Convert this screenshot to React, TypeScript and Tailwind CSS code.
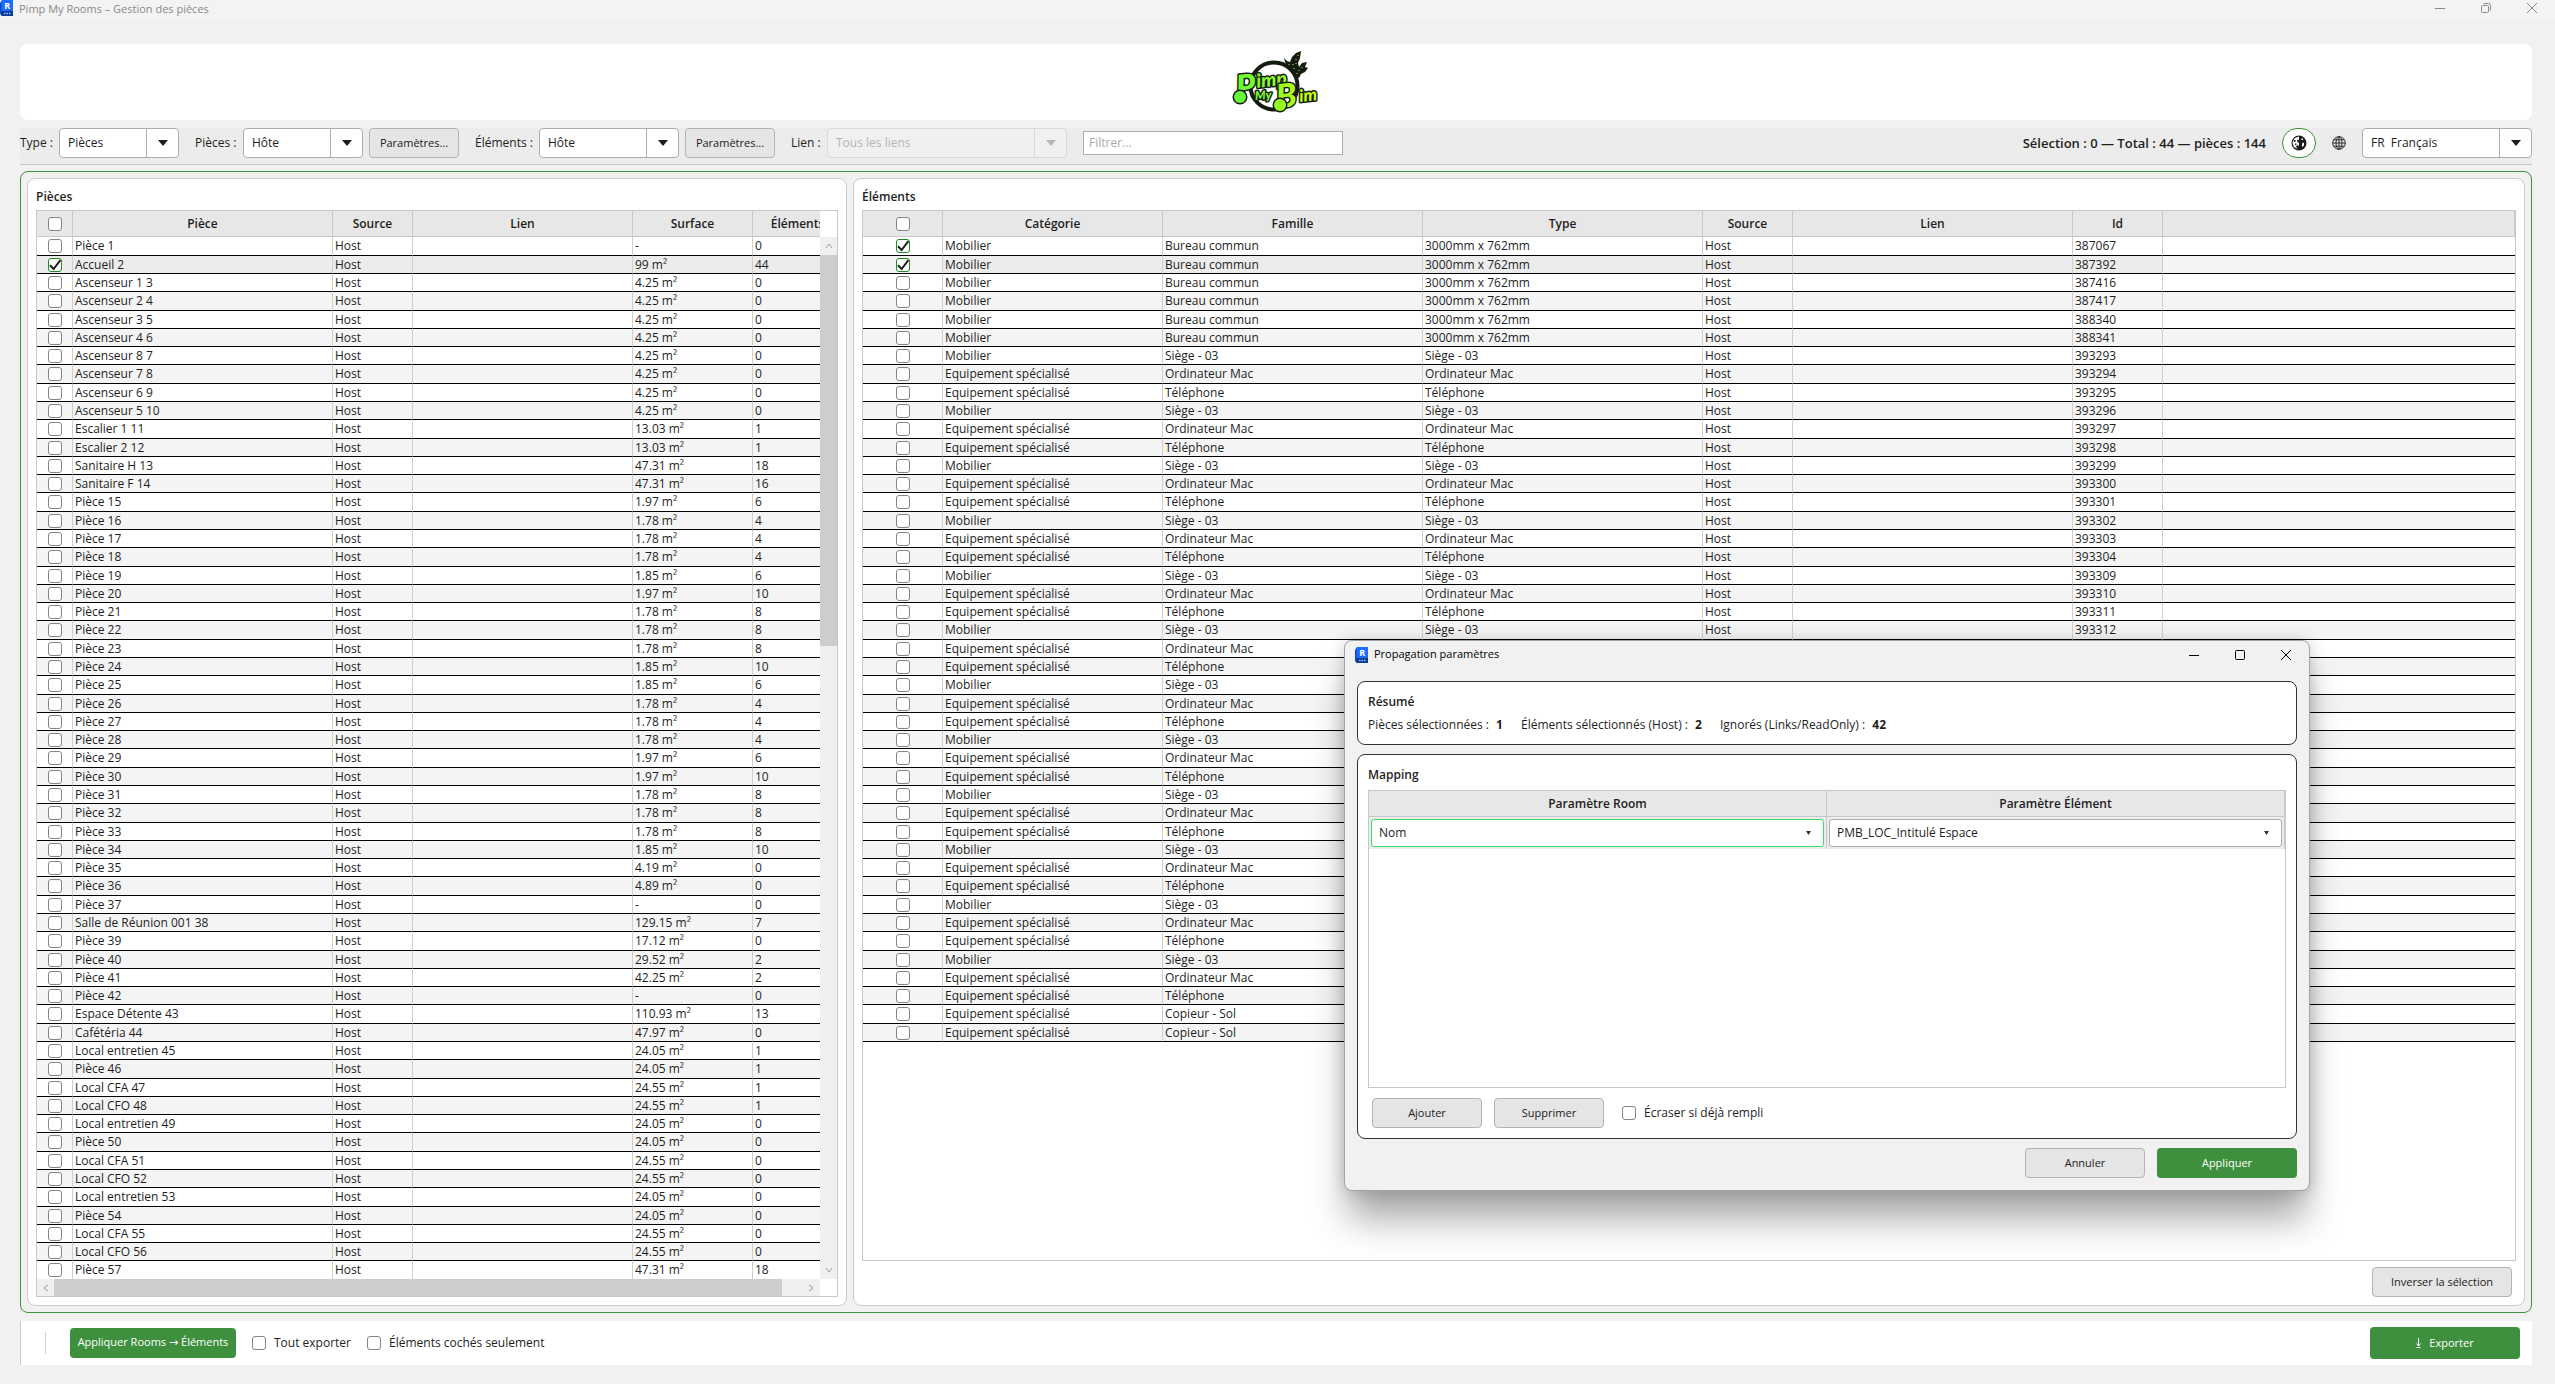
import type { ReactNode } from 'react'
import clsx from 'clsx'

type Room = [name: string, surface: string, elements: number]
type Item = [category: string, family: string, type: string, id: number]

const ROOMS: Room[] = [
  ['Pièce 1', '-', 0],
  ['Accueil 2', '99 m²', 44],
  ['Ascenseur 1 3', '4.25 m²', 0],
  ['Ascenseur 2 4', '4.25 m²', 0],
  ['Ascenseur 3 5', '4.25 m²', 0],
  ['Ascenseur 4 6', '4.25 m²', 0],
  ['Ascenseur 8 7', '4.25 m²', 0],
  ['Ascenseur 7 8', '4.25 m²', 0],
  ['Ascenseur 6 9', '4.25 m²', 0],
  ['Ascenseur 5 10', '4.25 m²', 0],
  ['Escalier 1 11', '13.03 m²', 1],
  ['Escalier 2 12', '13.03 m²', 1],
  ['Sanitaire H 13', '47.31 m²', 18],
  ['Sanitaire F 14', '47.31 m²', 16],
  ['Pièce 15', '1.97 m²', 6],
  ['Pièce 16', '1.78 m²', 4],
  ['Pièce 17', '1.78 m²', 4],
  ['Pièce 18', '1.78 m²', 4],
  ['Pièce 19', '1.85 m²', 6],
  ['Pièce 20', '1.97 m²', 10],
  ['Pièce 21', '1.78 m²', 8],
  ['Pièce 22', '1.78 m²', 8],
  ['Pièce 23', '1.78 m²', 8],
  ['Pièce 24', '1.85 m²', 10],
  ['Pièce 25', '1.85 m²', 6],
  ['Pièce 26', '1.78 m²', 4],
  ['Pièce 27', '1.78 m²', 4],
  ['Pièce 28', '1.78 m²', 4],
  ['Pièce 29', '1.97 m²', 6],
  ['Pièce 30', '1.97 m²', 10],
  ['Pièce 31', '1.78 m²', 8],
  ['Pièce 32', '1.78 m²', 8],
  ['Pièce 33', '1.78 m²', 8],
  ['Pièce 34', '1.85 m²', 10],
  ['Pièce 35', '4.19 m²', 0],
  ['Pièce 36', '4.89 m²', 0],
  ['Pièce 37', '-', 0],
  ['Salle de Réunion 001 38', '129.15 m²', 7],
  ['Pièce 39', '17.12 m²', 0],
  ['Pièce 40', '29.52 m²', 2],
  ['Pièce 41', '42.25 m²', 2],
  ['Pièce 42', '-', 0],
  ['Espace Détente 43', '110.93 m²', 13],
  ['Cafétéria 44', '47.97 m²', 0],
  ['Local entretien 45', '24.05 m²', 1],
  ['Pièce 46', '24.05 m²', 1],
  ['Local CFA 47', '24.55 m²', 1],
  ['Local CFO 48', '24.55 m²', 1],
  ['Local entretien 49', '24.05 m²', 0],
  ['Pièce 50', '24.05 m²', 0],
  ['Local CFA 51', '24.55 m²', 0],
  ['Local CFO 52', '24.55 m²', 0],
  ['Local entretien 53', '24.05 m²', 0],
  ['Pièce 54', '24.05 m²', 0],
  ['Local CFA 55', '24.55 m²', 0],
  ['Local CFO 56', '24.55 m²', 0],
  ['Pièce 57', '47.31 m²', 18],
]

const DESKS = [387067, 387392, 387416, 387417, 388340, 388341]
const WORKSTATIONS = [
  393293, 393294, 393295, 393296, 393297, 393298, 393299, 393300, 393301, 393302, 393303, 393304,
  393309, 393310, 393311, 393312, 393313, 393314, 393315, 393316, 393317, 393318, 393319, 393320,
  393321, 393322, 393323, 393324, 393325, 393326, 393327, 393328, 393329, 393330, 393331, 393332,
]

const KINDS: [string, string][] = [
  ['Mobilier', 'Siège - 03'],
  ['Equipement spécialisé', 'Ordinateur Mac'],
  ['Equipement spécialisé', 'Téléphone'],
]

const ITEMS: Item[] = [
  ...DESKS.map((id): Item => ['Mobilier', 'Bureau commun', '3000mm x 762mm', id]),
  ...WORKSTATIONS.map((id, i): Item => {
    const [category, family] = KINDS[i % 3]
    return [category, family, family, id]
  }),
  ['Equipement spécialisé', 'Copieur - Sol', 'Copieur - Sol', 393401],
  ['Equipement spécialisé', 'Copieur - Sol', 'Copieur - Sol', 393402],
]

const TH = 'h-[26px] border-r border-b border-[#c8c8c8] bg-[#e7e7e7] p-0 font-semibold'
const TD = 'h-[18px] border-r border-b border-r-[#cfcfcf] border-b-black p-0 pl-[2px] leading-4 group-nth-[7n+1]:h-[19px] group-nth-[7n+4]:h-[19px]'
const ROW = 'group even:bg-[#f4f4f4]'

function Checkbox({ checked = false, label, id }: { checked?: boolean; label?: string; id?: string }) {
  return (
    <span className="mx-auto grid size-[14px] shrink-0">
      <input
        id={id}
        type="checkbox"
        defaultChecked={checked}
        aria-label={label}
        className="peer size-[14px] appearance-none rounded-[3px] border border-[#858585] bg-white [grid-area:1/1] checked:border-[#1f8a24]"
      />
      <svg
        viewBox="0 0 14 14"
        className="pointer-events-none hidden size-[14px] fill-none stroke-[#1c1c1c] stroke-2 [grid-area:1/1] peer-checked:block"
      >
        <path d="M2 7.2 5.6 11 12.4 2.2" />
      </svg>
    </span>
  )
}

function Button({ className, children }: { className?: string; children: ReactNode }) {
  return (
    <button
      type="button"
      className={clsx(
        'h-[30px] shrink-0 rounded-[4px] border border-[#b4b4b4] bg-[#e5e5e5] text-[11px] whitespace-nowrap text-[#222]',
        className,
      )}
    >
      {children}
    </button>
  )
}

function GreenButton({ className, children }: { className?: string; children: ReactNode }) {
  return (
    <button
      type="button"
      className={clsx('shrink-0 rounded-[4px] bg-[#3e8f3e] text-[11px] whitespace-nowrap text-white', className)}
    >
      {children}
    </button>
  )
}

interface ComboProps {
  id: string
  value: string
  className: string
  disabled?: boolean
  label?: string
}

function Combo({ id, value, className, disabled, label }: ComboProps) {
  return (
    <div
      className={clsx(
        'flex h-[30px] shrink-0 overflow-hidden rounded-[4px] border',
        disabled ? 'border-[#d9d9d9] bg-[#f0f0f0] text-[#b5b5b5]' : 'border-[#adadad] bg-white text-[#1e1e1e]',
        className,
      )}
    >
      <select
        id={id}
        disabled={disabled}
        aria-label={label}
        className="min-w-0 flex-1 appearance-none bg-transparent pl-2 opacity-100 outline-none"
      >
        <option>{value}</option>
      </select>
      <span className={clsx('grid w-8 place-items-center border-l', disabled ? 'border-[#d9d9d9]' : 'border-[#adadad]')}>
        <svg viewBox="0 0 10 6" className="h-[6px] w-[10px] fill-current">
          <path d="M0 0h10L5 6z" />
        </svg>
      </span>
    </div>
  )
}

function MappingCombo({ value, label, focused }: { value: string; label: string; focused?: boolean }) {
  return (
    <div
      className={clsx(
        'flex h-7 items-center rounded-[3px] border bg-white pr-3',
        focused ? 'border-[#3ddc68]' : 'border-[#adadad]',
      )}
    >
      <select aria-label={label} className="h-full min-w-0 flex-1 appearance-none bg-transparent pl-[7px] outline-none">
        <option>{value}</option>
      </select>
      <svg viewBox="0 0 5 4" className="h-1 w-[5px] fill-[#333]">
        <path d="M0 0h5L2.5 4z" />
      </svg>
    </div>
  )
}

function RevitIcon() {
  return (
    <svg viewBox="0 0 13 16" className="h-4 w-[13px] shrink-0">
      <path d="M1 1.5 2.5 0H12a1 1 0 0 1 1 1v14a1 1 0 0 1-1 1H2L0 14V3z" fill="#0a4fc4" />
      <rect x="1.5" width="11.5" height="11" rx="1" fill="#1c6dff" />
      <rect x="1.5" y="11" width="11.5" height="5" fill="#0b3a94" />
      <text x="7.2" y="9" textAnchor="middle" className="fill-white font-['Open_Sans'] text-[9px] font-bold">R</text>
      <path d="M4 13.5h1.5M6.5 13.5H8M9 13.5h1.5" stroke="#9fc0ff" strokeWidth="1.5" />
    </svg>
  )
}

function Logo() {
  return (
    <svg viewBox="0 0 88 62" className="h-[62px] w-[88px]" role="img" aria-label="Pimp My Bim">
      <defs>
        <linearGradient id="lime" gradientUnits="userSpaceOnUse" x1="0" y1="0" x2="88" y2="0">
          <stop offset="0" stopColor="#5dfb3c" />
          <stop offset="0.5" stopColor="#8dfc22" />
          <stop offset="1" stopColor="#dcff08" />
        </linearGradient>
      </defs>
      <circle cx="42" cy="35" r="23.5" fill="#fff" stroke="#141b12" strokeWidth="4" />
      <path
        d="M53 11 52 7 55 10 58 11 60 6 64 2 69 0 68 7 66 12 67 16 70 12 75 11 73 16 76 17 73 21 69 23 67 27 62 25 60 20 56 16z"
        fill="#141b12"
      />
      <path
        d="M66 4v1M64 8v1M61 13v1M64 12v1M62 17v1M67 19v1M65 22v1M70 16v1M57 13v1"
        stroke="#b7ff1c"
        strokeWidth="1"
      />
      <g
        fill="url(#lime)"
        stroke="#141b12"
        strokeWidth="3"
        strokeLinejoin="round"
        paintOrder="stroke"
        className="font-['Lato'] font-black italic"
      >
        <text x="23" y="49" fontSize="12" transform="rotate(-4 24 46)">My</text>
        <g transform="rotate(-6 14 46)">
          <text x="26" y="38" fontSize="19">imp</text>
          <text x="5" y="47" fontSize="33">P</text>
        </g>
        <g transform="rotate(-6 48 55)">
          <text x="68" y="53" fontSize="17">im</text>
          <text x="45" y="57" fontSize="33">B</text>
        </g>
        <circle cx="8" cy="46" r="6" />
        <circle cx="48" cy="54" r="6" />
      </g>
    </svg>
  )
}

// Windows caption glyphs: minimise, maximise / restore, close
function CaptionButtons({ restored, className }: { restored?: boolean; className: string }) {
  return (
    <div className={clsx('flex items-center fill-none', className)}>
      <button type="button" aria-label="Réduire">
        <svg viewBox="0 0 10 10" className="size-[10px]"><path d="M0 5.5h10" /></svg>
      </button>
      <button type="button" aria-label="Agrandir">
        {restored ? (
          <svg viewBox="0 0 10 10" className="size-[10px]">
            <rect x="0.5" y="2.5" width="7" height="7" rx="1" />
            <path d="M2.5 .5h5a2 2 0 0 1 2 2v5" />
          </svg>
        ) : (
          <svg viewBox="0 0 10 10" className="size-[10px]"><rect x="0.5" y="0.5" width="9" height="9" rx="1" /></svg>
        )}
      </button>
      <button type="button" aria-label="Fermer">
        <svg viewBox="0 0 10 10" className="size-[10px]"><path d="M0 0l10 10M10 0 0 10" /></svg>
      </button>
    </div>
  )
}

function Toolbar() {
  return (
    <div className="mt-2 flex h-[37px] shrink-0 items-start border-b border-[#c8c8c8] bg-[#ececec] whitespace-nowrap">
      <label htmlFor="kind" className="w-[39px] leading-[30px]">Type :</label>
      <Combo id="kind" value="Pièces" className="w-[120px]" />
      <label htmlFor="rooms" className="ml-4 w-12 leading-[30px]">Pièces :</label>
      <Combo id="rooms" value="Hôte" className="w-[120px]" />
      <Button className="ml-[6px] w-[90px]">Paramètres...</Button>
      <label htmlFor="elements" className="ml-4 w-16 leading-[30px]">Éléments :</label>
      <Combo id="elements" value="Hôte" className="w-[140px]" />
      <Button className="ml-[6px] w-[90px]">Paramètres...</Button>
      <label htmlFor="link" className="ml-4 w-9 leading-[30px]">Lien :</label>
      <Combo id="link" value="Tous les liens" className="w-[240px]" disabled />
      <input
        type="text"
        aria-label="Filtrer"
        placeholder="Filtrer..."
        className="mt-[3px] ml-4 h-6 w-[260px] border border-[#adadad] bg-white pb-[2px] pl-[5px] outline-none placeholder:text-[#a8a8a8]"
      />
      <p className="mr-4 ml-auto text-[13px] leading-[30px] font-semibold text-[#1e1e1e]">
        Sélection : 0 — Total : 44 — pièces : 144
      </p>
      <button
        type="button"
        aria-label="Thème"
        className="grid h-[30px] w-[34px] place-items-center rounded-full border border-[#3e8f3e] bg-white"
      >
        <svg viewBox="0 0 16 16" className="size-4">
          <circle cx="8" cy="8" r="7.5" fill="#1c1c1c" />
          <path d="M3 4 5 2.5 8 1.5V5L6.5 4.5 6 6.5 8 8V11L6.5 10 5 11.5 6.5 14 3 12 1.5 8z" fill="#fff" />
          <path d="M10.5 3.5h1.5v1.5h-1.5zM11 8.500l2-1v3l-2 1.5z" fill="#fff" />
          <path d="M3 5h1.5v2H3zM4 8.5h1.5v1.5H4z" fill="#1c1c1c" />
        </svg>
      </button>
      <button type="button" aria-label="Langue" className="mx-4 grid h-[30px] w-[14px] place-items-center">
        <svg viewBox="0 0 14 14" className="size-[14px] fill-none stroke-[#2b2b2b]">
          <circle cx="7" cy="7" r="6.3" />
          <ellipse cx="7" cy="7" rx="3" ry="6.3" />
          <path d="M7 .7v12.6M.7 7h12.6M1.6 3.8h10.8M1.6 10.2h10.8" />
        </svg>
      </button>
      <Combo id="lang" label="Langue de l’interface" value={'FR\u00a0 Français'} className="w-[170px]" />
    </div>
  )
}

function RoomsPanel() {
  return (
    <section className="flex w-[820px] shrink-0 flex-col rounded-lg border border-[#cacaca] bg-white p-2">
      <h2 className="mb-[3px] leading-5 font-semibold">Pièces</h2>
      <div className="flex min-h-0 flex-1 flex-col border border-[#c8c8c8]">
        <div className="flex min-h-0 flex-1">
          <div className="min-w-0 flex-1 overflow-hidden">
            <table className="w-[806px] table-fixed border-separate border-spacing-0">
              <thead>
                <tr>
                  <th className={clsx(TH, 'w-9')}><Checkbox label="Toutes les pièces" /></th>
                  <th className={clsx(TH, 'w-[260px]')}>Pièce</th>
                  <th className={clsx(TH, 'w-20')}>Source</th>
                  <th className={clsx(TH, 'w-[220px]')}>Lien</th>
                  <th className={clsx(TH, 'w-[120px]')}>Surface</th>
                  <th className={clsx(TH, 'w-[90px]')}>Éléments</th>
                </tr>
              </thead>
              <tbody>
                {ROOMS.map(([name, surface, elements], i) => (
                  <tr key={name} className={clsx(ROW, i === 1 && 'bg-[#ececec]!')}>
                    <td className={clsx(TD, 'pl-0!')}><Checkbox checked={i === 1} label={name} /></td>
                    <td className={TD}>{name}</td>
                    <td className={TD}>Host</td>
                    <td className={TD} />
                    <td className={TD}>{surface}</td>
                    <td className={TD}>{elements}</td>
                  </tr>
                ))}
              </tbody>
            </table>
          </div>
          <div className="mt-[26px] flex w-[17px] flex-col items-center bg-[#f0f0f0]">
            <svg viewBox="0 0 8 8" className="my-[5px] h-2 w-2 shrink-0 fill-none stroke-[#9a9a9a]"><path d="M1 6 4 2l3 4" /></svg>
            <div className="h-[391px] w-full bg-[#cdcdcd]" />
            <svg viewBox="0 0 8 8" className="mt-auto mb-[5px] h-2 w-2 shrink-0 fill-none stroke-[#9a9a9a]"><path d="M1 2l3 4 3-4" /></svg>
          </div>
        </div>
        <div className="mr-[17px] flex h-[17px] shrink-0 items-center bg-[#f0f0f0]">
          <svg viewBox="0 0 8 8" className="mr-1 ml-[5px] h-2 w-2 shrink-0 fill-none stroke-[#9a9a9a]"><path d="M6 1 2 4l4 3" /></svg>
          <div className="h-full w-[728px] bg-[#cdcdcd]" />
          <svg viewBox="0 0 8 8" className="mr-[5px] ml-auto h-2 w-2 shrink-0 fill-none stroke-[#9a9a9a]"><path d="M2 1l4 3-4 3" /></svg>
        </div>
      </div>
    </section>
  )
}

function ElementsPanel() {
  return (
    <section className="flex min-w-0 flex-1 flex-col rounded-lg border border-[#cacaca] bg-white p-2">
      <h2 className="mb-[3px] leading-5 font-semibold">Éléments</h2>
      <div className="min-h-0 flex-1 overflow-hidden border border-[#c8c8c8]">
        <table className="w-full table-fixed border-separate border-spacing-0">
          <thead>
            <tr>
              <th className={clsx(TH, 'w-20')}><Checkbox label="Tous les éléments" /></th>
              <th className={clsx(TH, 'w-[220px]')}>Catégorie</th>
              <th className={clsx(TH, 'w-[260px]')}>Famille</th>
              <th className={clsx(TH, 'w-[280px]')}>Type</th>
              <th className={clsx(TH, 'w-[90px]')}>Source</th>
              <th className={clsx(TH, 'w-[280px]')}>Lien</th>
              <th className={clsx(TH, 'w-[90px]')}>Id</th>
              <th className={TH} />
            </tr>
          </thead>
          <tbody>
            {ITEMS.map(([category, family, type, id], i) => {
              const td = clsx(TD, i === 1 && 'bg-[#ececec]')
              return (
                <tr key={id} className={ROW}>
                  <td className={clsx(TD, 'pl-0!')}><Checkbox checked={i < 2} label={`Élément ${id}`} /></td>
                  <td className={td}>{category}</td>
                  <td className={td}>{family}</td>
                  <td className={td}>{type}</td>
                  <td className={td}>Host</td>
                  <td className={td} />
                  <td className={td}>{id}</td>
                  <td className={clsx(TD, 'border-r-0')} />
                </tr>
              )
            })}
          </tbody>
        </table>
      </div>
      <Button className="mt-[6px] mr-1 w-[140px] self-end">Inverser la sélection</Button>
    </section>
  )
}

function PropagationDialog() {
  return (
    <div
      role="dialog"
      aria-labelledby="dialog-title"
      className="absolute top-[640px] left-[1344px] flex h-[551px] w-[966px] flex-col rounded-lg border border-[#a3a3a3] bg-[#f1f1f1] px-3 shadow-[0_32px_36px_-4px_rgba(0,0,0,0.34),0_0_16px_rgba(0,0,0,0.18)]"
    >
      <div className="-ml-[2px] flex h-[27px] shrink-0 items-center gap-1 text-[11px] text-black">
        <RevitIcon />
        <h2 id="dialog-title" className="ml-[2px]">Propagation paramètres</h2>
        <CaptionButtons className="mr-[6px] ml-auto gap-9 stroke-black" />
      </div>

      <section className="mt-[13px] h-16 shrink-0 rounded-lg border border-[#333] bg-white px-[10px] pt-[10px]">
        <h3 className="leading-5 font-semibold">Résumé</h3>
        <p className="mt-[3px] flex gap-[18px] leading-5">
          <span>Pièces sélectionnées : <b className="ml-1">1</b></span>
          <span>Éléments sélectionnés (Host) : <b className="ml-1">2</b></span>
          <span>Ignorés (Links/ReadOnly) : <b className="ml-1">42</b></span>
        </p>
      </section>

      <section className="mt-[9px] flex min-h-0 flex-1 flex-col rounded-lg border border-[#333] bg-white px-[10px] pt-[10px] pb-[10px]">
        <h3 className="leading-5 font-semibold">Mapping</h3>
        <div className="mt-[5px] min-h-0 flex-1 border border-[#c8c8c8]">
          <table className="w-full table-fixed border-separate border-spacing-0">
            <thead>
              <tr>
                <th className={TH}>Paramètre Room</th>
                <th className={TH}>Paramètre Élément</th>
              </tr>
            </thead>
            <tbody>
              <tr className="bg-[#ececec]">
                <td className="h-8 border-r border-[#c8c8c8] px-[2px] py-0">
                  <MappingCombo value="Nom" label="Paramètre Room" focused />
                </td>
                <td className="h-8 border-r border-[#c8c8c8] px-[2px] py-0">
                  <MappingCombo value="PMB_LOC_Intitulé Espace" label="Paramètre Élément" />
                </td>
              </tr>
            </tbody>
          </table>
        </div>
        <div className="mt-[10px] ml-1 flex items-center">
          <Button className="w-[110px]">Ajouter</Button>
          <Button className="mr-[18px] ml-3 w-[110px]">Supprimer</Button>
          <div className="flex items-center gap-2">
            <Checkbox id="overwrite" />
            <label htmlFor="overwrite">Écraser si déjà rempli</label>
          </div>
        </div>
      </section>

      <div className="flex shrink-0 justify-end gap-3 pt-[9px] pb-3">
        <Button className="w-[120px]">Annuler</Button>
        <GreenButton className="h-[30px] w-[140px]">Appliquer</GreenButton>
      </div>
    </div>
  )
}

export default function App() {
  return (
    <div className="relative flex h-screen flex-col overflow-hidden bg-[#f1f1f1] font-['Open_Sans','Noto_Sans',sans-serif] text-[12px] text-[#1e1e1e]">
      <header className="flex h-5 shrink-0 items-start bg-[#f3f3f3] pr-[18px] text-[11px] text-[#8a8a8a]">
        <RevitIcon />
        <h1 className="ml-[6px] leading-[18px]">Pimp My Rooms – Gestion des pièces</h1>
        <CaptionButtons restored className="ml-auto h-[15px] gap-9 stroke-[#8a8a8a]" />
      </header>

      <main className="mr-[23px] ml-5 flex min-h-0 flex-1 flex-col">
        <div className="mt-6 flex h-[76px] shrink-0 justify-center rounded-lg bg-white pt-[7px]">
          <Logo />
        </div>
        <Toolbar />
        <div className="mt-[6px] flex min-h-0 flex-1 gap-[6px] rounded-lg border border-[#3e8f3e] p-[6px]">
          <RoomsPanel />
          <ElementsPanel />
        </div>
      </main>

      <footer className="mt-2 mr-[23px] mb-[19px] ml-5 flex h-11 shrink-0 items-center border-l border-[#c8c8c8] bg-white pr-3 pl-6">
        <div className="mr-6 h-[22px] w-px bg-[#d0d0d0]" />
        <GreenButton className="mr-4 h-[30px] w-[166px]">
          Appliquer Rooms <span className="font-['DejaVu_Sans']">→</span> Éléments
        </GreenButton>
        <div className="mr-4 flex items-center gap-2">
          <Checkbox id="export-all" />
          <label htmlFor="export-all">Tout exporter</label>
        </div>
        <div className="flex items-center gap-2">
          <Checkbox id="checked-only" />
          <label htmlFor="checked-only">Éléments cochés seulement</label>
        </div>
        <GreenButton className="ml-auto flex h-8 w-[150px] items-center justify-center gap-2">
          <svg viewBox="0 0 5 10" className="h-[10px] w-[5px] fill-none stroke-white">
            <path d="M2.5 0v8M.5 5.5l2 2.5 2-2.5M.5 9.5h4" />
          </svg>
          Exporter
        </GreenButton>
      </footer>

      <PropagationDialog />
    </div>
  )
}
